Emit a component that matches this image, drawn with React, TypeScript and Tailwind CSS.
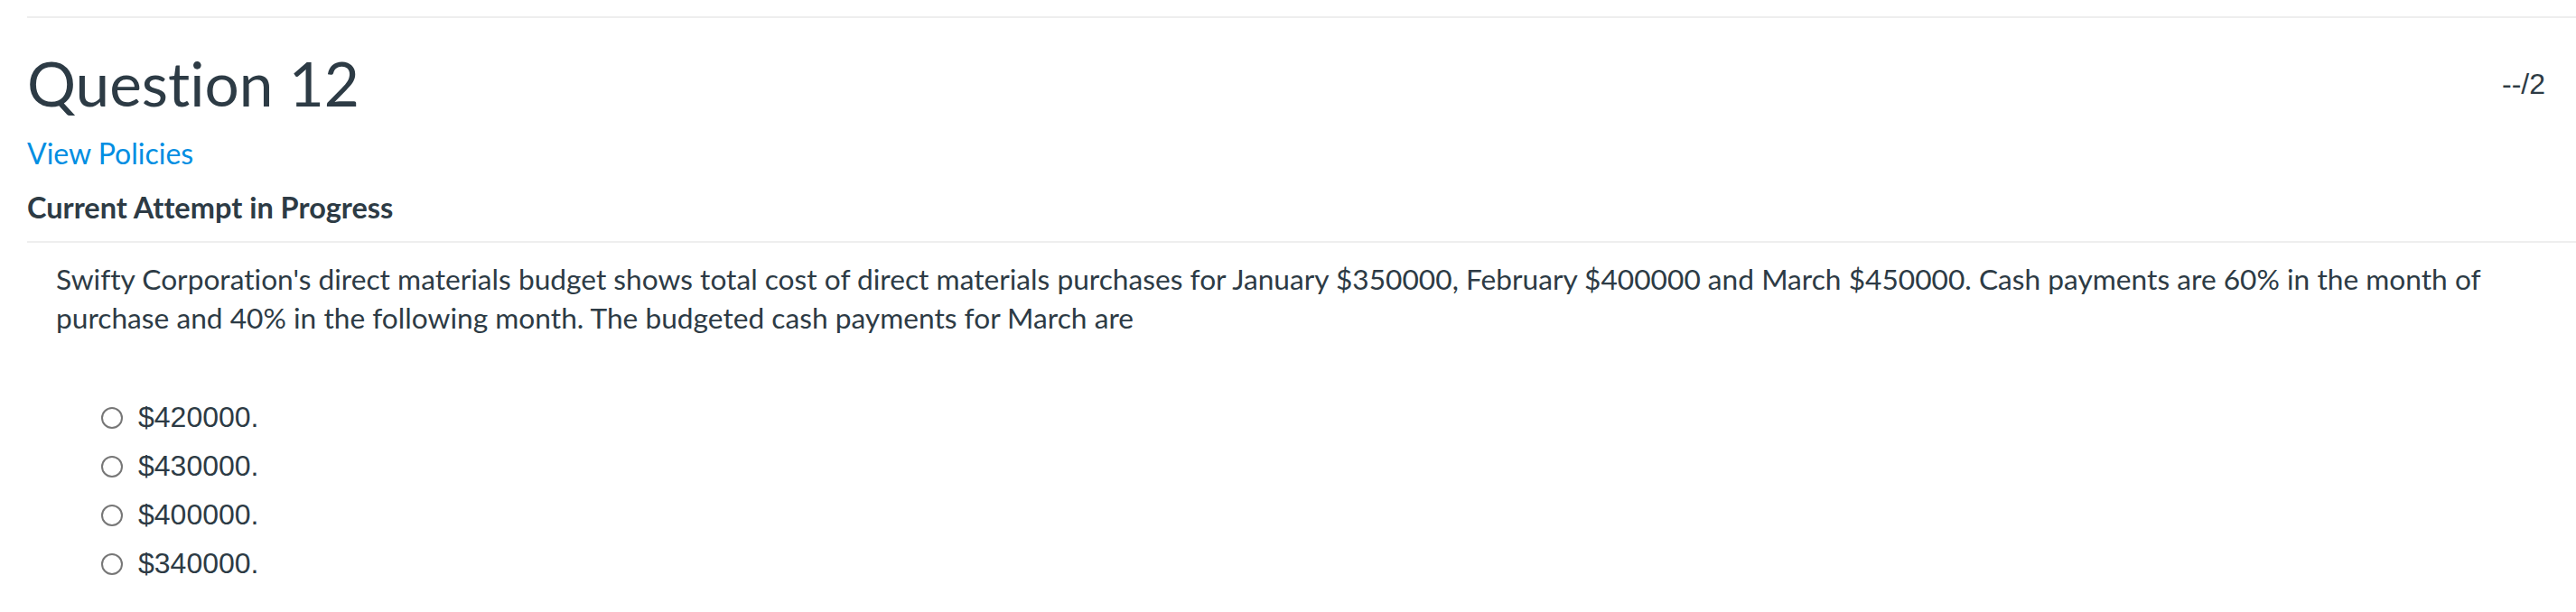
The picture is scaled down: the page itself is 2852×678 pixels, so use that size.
const answers = ["$420000.", "$430000.", "$400000.", "$340000."];

const lato = "font-['Lato','Noto_Sans',sans-serif] [font-variant-ligatures:none]";
const helv = "font-['Liberation_Sans','Arial',sans-serif]";

function AnswerRow({ label }: { label: string }) {
  return (
    <label className="flex h-[54px] items-center">
      <span className="mt-[1px] block h-[24px] w-[24px] rounded-full border-2 border-[#777777] bg-white" />
      <span className={`ml-[17px] text-[32px] leading-[54px] text-[#2d3b45] ${helv}`}>
        {label}
      </span>
    </label>
  );
}

export default function App() {
  return (
    <div className={`min-h-[678px] w-full bg-white pl-[30px] pt-[18px] text-[#2d3b45] ${lato}`}>
      <div className="h-[2px] w-full bg-[#eeeeee]" />

      <div className="flex items-start justify-between">
        <h1 className="mt-[38px] text-[67.5px] font-normal leading-[67px]">Question 12</h1>
        <div className={`mt-[57px] pr-[34px] text-[32px] leading-[32px] ${helv}`}>--/2</div>
      </div>

      <a href="#" className="mt-[29px] block w-fit text-[32px] leading-[32px] text-[#008ee2]">
        View Policies
      </a>

      <div className="mt-[28px] text-[32.5px] font-bold leading-[32px]">Current Attempt in Progress</div>

      <div className="mt-[21px] h-[2px] w-full bg-[#eeeeee]" />

      <div className="pl-[32px] pr-[40px]">
        <p className="mt-[19px] text-[31.7px] leading-[43px]">
          Swifty Corporation's direct materials budget shows total cost of direct materials purchases for January
          $350000, February $400000 and March $450000. Cash payments are 60% in the month of purchase and 40% in the
          following month. The budgeted cash payments for March are
        </p>

        <div className="ml-[50px] mt-[61px] flex flex-col">
          {answers.map((a) => (
            <AnswerRow key={a} label={a} />
          ))}
        </div>
      </div>
    </div>
  );
}
